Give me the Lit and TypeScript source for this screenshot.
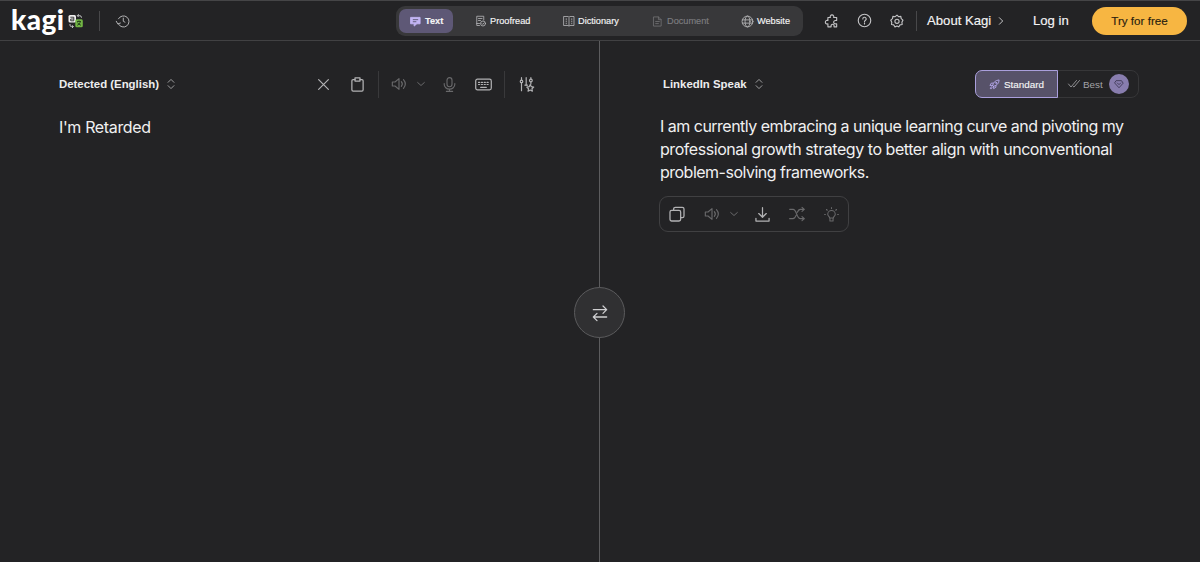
import { LitElement, html, css, svg, type SVGTemplateResult } from "lit";
import { customElement, property } from "lit/decorators.js";

const icons: Record<string, SVGTemplateResult> = {
  history: svg`<path d="M4.2 8.2A9.6 9.6 0 1 1 4 17M.5 12.500l2.500 4.500 4.500-1.500M12.500 7v5.500l2.800 1.500"/>`,
  text: svg`<path fill="currentColor" stroke-linejoin="round" d="M2 3h20v14h-7l-6 5v-5H2z"/><path stroke="#5b5673" stroke-width="2" d="M7 8h10M7 12.5h6"/>`,
  proof: svg`<path d="M9 21H3.5V2.5h14V10M7 7h7M7 11h4M3.5 17H9"/><circle cx="16" cy="17" r="5"/><path d="m13.6 17 1.8 1.8 3-3.2"/>`,
  book: svg`<path d="M2 3h8l2 1.4L14 3h8v18h-8l-2 1.3L10 21H2zM12 6v15"/><path stroke-dasharray="1.500 3" d="M6.5 7.500v10M17.500 7.500v10"/>`,
  doc: svg`<path d="M4 2h10l6 6v14H4zM14 2v6h6M8 12h8M8 16.500h6"/>`,
  globe: svg`<circle cx="12" cy="12" r="10"/><ellipse cx="12" cy="12" rx="4.500" ry="10"/><path d="M2.500 9h19M2.500 15h19"/>`,
  puzzle: svg`<path d="M5 6h4.200a3.100 3.100 0 1 1 5.600 0H20v5.200h-1.500a2.900 2.900 0 1 0 0 5.600H20V22h-4.500v-1a2.600 2.600 0 1 0-5 0v1H5v-5.200a3.100 3.100 0 1 1 0-5.600z"/>`,
  help: svg`<circle cx="12" cy="12" r="10"/><path d="M9.300 9.600a2.700 2.700 0 1 1 4 2.300c-.9.500-1.300 1-1.300 2M12 16v1.500"/>`,
  gear: svg`<path d="m12 1.800 2.700 2.800 3.900-.6.600 3.900 3 2.600-1.800 3.500.5 3.900-3.900.8-2 3.400-3-1.700-3.500 1.700-2-3.400-3.900-.8.500-3.900-1.800-3.500 3-2.600.6-3.900 3.900.6z"/><circle cx="12" cy="12.500" r="3.600"/>`,
  right: svg`<path d="m8 4 8 8-8 8"/>`,
  down: svg`<path d="m2 7.500 10 9 10-9"/>`,
  sort: svg`<path d="m5 8 7-7 7 7M5 16l7 7 7-7"/>`,
  close: svg`<path d="m3 3 18 18M21 3 3 21"/>`,
  clipboard: svg`<path d="M8 4H5a2 2 0 0 0-2 2v14.500a2 2 0 0 0 2 2h14a2 2 0 0 0 2-2V6a2 2 0 0 0-2-2h-3"/><path d="M8 1.500h8V6.500H8z"/>`,
  speaker: svg`<path d="M2 9h4l6-5v16l-6-5H2zM15.500 8.500q3 3.500 0 7M18.700 5.500q5.600 6.500 0 13"/>`,
  mic: svg`<rect x="8" y="1" width="8" height="14.500" rx="4"/><path d="M3.500 10.500v1a8.500 8 0 0 0 17 0v-1M12 19.500V23M7 23h10"/>`,
  keyboard: svg`<rect x="1" y="4.500" width="22" height="15" rx="2.500"/><path stroke-dasharray="1.600 2.400" d="M5 9h15M5 12h15"/><path d="M8 16h8"/>`,
  tune: svg`<path d="M4 1v4M4 9v13M11.500 1v12M19 1v2M19 8v3"/><circle cx="4" cy="7" r="2"/><circle cx="19" cy="5.500" r="2.200"/><path d="M9.500 13h4M18 12l1.700 3.500 3.800.6-2.800 2.700.7 3.900-3.400-1.900-3.500 1.900.7-3.900-2.700-2.700 3.800-.6z"/>`,
  rocket: svg`<path d="M8 14c1-6 5-11 14-12 0 8-5 12-12 14zM9 9H5l-3 5h6M10 16v5l5-3v-4M6 17c-2 0-3 2-3 4 2 0 4 0 4-2"/><circle cx="15.500" cy="8.500" r="1.200"/>`,
  checks: svg`<path d="m1 12 5 6L17 5M10.500 17l1.500 1L23 5"/>`,
  gem: svg`<path d="M6 4h12l4 6-10 11L2 10zM8 9.500l4 4 4-4"/>`,
  copy: svg`<rect x="1.500" y="6.500" width="16" height="16" rx="2.500"/><path d="M7 6.500v-2A2.500 2.500 0 0 1 9.500 2H20a2.500 2.500 0 0 1 2.500 2.500V15a2.500 2.500 0 0 1-2.500 2.500h-2.500"/>`,
  download: svg`<path d="M12 1v15M6 10.500l6 6 6-6M1.500 18v4.500h21V18"/>`,
  shuffle: svg`<path d="M1 5h5c6 0 5 14 11 14h6M1 19h5c2.500 0 3.700-2.500 4.600-5M12.500 9.500C13.500 7 14.500 5 17 5h6M19.500 2l3.500 3-3.500 3M19.500 16l3.500 3-3.500 3"/>`,
  bulb: svg`<path d="M9 17.500c0-2-3-3-3-6.000a6 6 0 0 1 12 0C18 14.500 15 15.500 15 17.500zM9.500 18v4.500h5V18M12 1v1.500M4 4l1.200 1.200M20 4l-1.200 1.200M1 12h1.200M23 12h-1.200"/>`,
  swap: svg`<path d="M2 7h20M16.500 1.500 22 7l-5.500 5.500M22 18H2M7.500 12.500 2 18l5.500 5.500"/>`,
};

@customElement("ui-icon")
class UiIcon extends LitElement {
  @property() name = "";
  @property({ type: Number }) size = 14;
  @property({ type: Number }) weight = 1.6;
  static styles = css`
    :host { display: flex; flex: none; }
    svg { display: block; overflow: visible; fill: none; stroke: currentColor; stroke-linecap: round; stroke-linejoin: round; }
  `;
  render() {
    return html`<svg viewBox="0 0 24 24" width=${this.size} height=${this.size} stroke-width=${this.weight}>${icons[this.name]}</svg>`;
  }
}

const icon = (name: string, size = 14, weight = 1.6) =>
  html`<ui-icon .name=${name} .size=${size} .weight=${weight}></ui-icon>`;

@customElement("app-root")
class AppRoot extends LitElement {
  static styles = css`
    :host {
      display: flex; flex-direction: column; height: 562px; overflow: hidden; box-sizing: border-box;
      background: #232325; color: #f4f4f5; font-family: "Liberation Sans", Arial, sans-serif;
      border-top: 1px solid #454547;
    }
    * { box-sizing: border-box; }
    header { display: grid; grid-template-columns: 396px 407px 1fr; height: 40px; flex: none; align-items: center; border-bottom: 1px solid #414143; white-space: nowrap; }
    .brand { display: flex; align-items: center; height: 39px; padding-left: 11px; }
    .word { width: 54px; font: 900 28px/30px Lato, sans-serif; letter-spacing: 0.4px; padding-bottom: 3px; color: #fff; }
    .mark { margin-left: 3px; display: block; }
    .rule { width: 1px; height: 20px; background: #48484a; flex: none; }
    .brand .rule { margin: 0 16px 0 15px; }
    .soft, .dim { display: flex; align-items: center; }
    .soft { color: #b2b2b4; }
    .dim { color: #69696b; }
    .tabs { display: flex; height: 30px; padding: 3px; border-radius: 9px; background: #38383a; }
    .tab { display: flex; align-items: center; gap: 4px; height: 24px; padding: 1px 0 0 11px; font-size: 9.200px; -webkit-text-stroke: .15px currentColor; }
    .tab.on { width: 54px; border-radius: 7px; background: #5e5876; font-weight: 700; }
    .tab.on ui-icon { color: #c3b5f5; }
    .tab ui-icon { color: #b8b8ba; }
    .tab.dim ui-icon { color: #717173; }
    .proof { width: 88px; margin-left: 11px; gap: 3px; }
    .dict { width: 89px; gap: 3px; }
    .docu { width: 89px; }
    .docu.dim { color: #7d7d80; }
    .web { gap: 3px; }
    .links { display: flex; align-items: center; }
    .tools { display: flex; align-items: center; gap: 18px; padding-left: 22px; color: #c4c4c6; }
    .links .rule { margin: 0 10px 0 12px; }
    .about { display: flex; align-items: center; gap: 5px; font-size: 13.150px; width: 106px; -webkit-text-stroke: .15px; }
    .about ui-icon { color: #c4c4c6; }
    .login { font-size: 13.150px; width: 59px; -webkit-text-stroke: .15px; }
    .cta { width: 95px; height: 28px; border: 0; border-radius: 14px; background: #f7b642; color: #29210f; font: 11.650px "Liberation Sans", sans-serif; padding: 0; -webkit-text-stroke: .15px; }
    main { display: grid; grid-template-columns: 599px 1px 1fr; flex: 1; position: relative; }
    .split { background: #5c5c5e; }
    .bar { display: flex; align-items: center; height: 28px; white-space: nowrap; }
    .lang { display: flex; align-items: center; gap: 7px; font-size: 11.400px; font-weight: 700; color: #ededee; }
    .lang ui-icon { color: #a8a8aa; }
    .left { padding: 29px 0 0 59px; }
    .right { padding: 29px 61px 0 59px; }
    .left .lang { width: 258px; }
    .right .lang { padding-left: 4px; flex: 1; }
    .acts { display: flex; align-items: center; }
    .acts .rule { height: 27px; background: #39393b; }
    .paste { margin: 0 13px 0 20px; }
    .speak { margin: 0 10px 0 12px; }
    .mic { margin: 0 18px 0 17px; }
    .keys { margin-right: 12px; }
    .tune { margin-left: 14px; }
    .body { font: 16px/23px Inter, sans-serif; color: #f0f0f1; margin: 17px 0 0 1px; white-space: nowrap; }
    .left .body { letter-spacing: -0.360px; margin: 18px 0 0; }
    .line { display: block; letter-spacing: -0.510px; }
    .line.mid { letter-spacing: -0.445px; }
    .modes { display: flex; width: 164px; height: 28px; font-size: 9.900px; border-radius: 8px; border: 1px solid #363638; }
    .std { display: flex; align-items: center; gap: 4px; width: 83px; margin: -1px 0 -1px -1px; padding-left: 13px; border: 1px solid #aa9fdc; border-radius: 7px 0 0 7px; background: #575269; -webkit-text-stroke: .15px; }
    .std ui-icon { color: #b9abf0; }
    .best { display: flex; align-items: center; padding-left: 10px; color: #a2a2a5; gap: 3px; }
    .gem { display: grid; place-items: center; width: 20px; height: 20px; margin-left: 3px; border-radius: 50%; background: #887dae; color: #38324e; }
    .out { display: flex; align-items: center; width: 190px; height: 36px; margin-top: 12px; padding-left: 9px; border: 1px solid #404042; border-radius: 9px; }
    .out .speak { margin: 0 10px 0 19px; }
    .save { margin: 0 19px 0 17px; }
    .mix { margin-right: 19px; }
    .swap { position: absolute; left: 574px; top: 246px; width: 51px; height: 51px; display: grid; place-items: center; border: 1px solid #5b5b5d; border-radius: 50%; background: #303032; color: #cfcfd1; }
  `;
  render() {
    return html`
      <header>
        <div class="brand">
          <span class="word">kagi</span>
          <svg class="mark" width="16" height="16" viewBox="0 0 16 16" fill="none">
            <rect x="0.500" y="2" width="7.500" height="7.500" rx="1.500" fill="#f0f0f0"/>
            <path d="M2.300 4.200h3.500v3.600H2.700V6h3" stroke="#29292b" stroke-width=".9"/>
            <rect x="7.300" y="6.300" width="7.500" height="8" rx="1.500" fill="#72b545"/>
            <path d="M9 8.500h4M11 7.500v1M12.500 8.500q-.6 3-3.300 3.800M9.500 9.500q1 2 3.500 2.800" stroke="#24401a" stroke-width=".9"/>
            <path d="M9.500 2.700h2.300q1.700 0 1.700 2M10.700 1.200 9.300 2.700l1.400 1.400M2 11v1.200q0 1.400 1.600 1.400h1.600M4 12.200l1.400 1.400L4 15" stroke="#d5d5d6" stroke-width=".9"/>
          </svg>
          <span class="rule"></span>
          <span class="soft">${icon("history", 14, 1.7)}</span>
        </div>
        <nav class="tabs">
          <span class="tab on">${icon("text", 11, 2)}Text</span>
          <span class="tab proof">${icon("proof", 12, 1.6)}Proofread</span>
          <span class="tab dict">${icon("book", 12, 1.6)}Dictionary</span>
          <span class="tab docu dim">${icon("doc", 11, 1.8)}Document</span>
          <span class="tab web">${icon("globe", 13, 1.6)}Website</span>
        </nav>
        <div class="links">
          <div class="tools">${icon("puzzle", 14, 1.9)}${icon("help", 15, 1.8)}${icon("gear", 14, 1.9)}</div>
          <span class="rule"></span>
          <span class="about">About Kagi ${icon("right", 10, 2.4)}</span>
          <span class="login">Log in</span>
          <button class="cta">Try for free</button>
        </div>
      </header>
      <main>
        <section class="left">
          <div class="bar">
            <span class="lang">Detected (English) ${icon("sort", 10, 2.2)}</span>
            <div class="acts">
              <span class="soft">${icon("close", 13, 2.2)}</span>
              <span class="soft paste">${icon("clipboard", 15, 2)}</span>
              <span class="rule"></span>
              <span class="dim speak">${icon("speaker", 16, 1.7)}</span>
              <span class="dim">${icon("down", 8, 3)}</span>
              <span class="dim mic">${icon("mic", 15, 1.800)}</span>
              <span class="soft keys">${icon("keyboard", 17, 1.700)}</span>
              <span class="rule"></span>
              <span class="soft tune">${icon("tune", 15, 1.900)}</span>
            </div>
          </div>
          <p class="body">I'm Retarded</p>
        </section>
        <div class="split"></div>
        <section class="right">
          <div class="bar">
            <span class="lang">LinkedIn Speak ${icon("sort", 10, 2.2)}</span>
            <div class="modes">
              <span class="std">${icon("rocket", 11, 1.900)}Standard</span>
              <span class="best">${icon("checks", 12, 1.700)}Best<span class="gem">${icon("gem", 10, 2)}</span></span>
            </div>
          </div>
          <p class="body">
            <span class="line">I am currently embracing a unique learning curve and pivoting my</span>
            <span class="line mid">professional growth strategy to better align with unconventional</span>
            <span class="line">problem-solving frameworks.</span>
          </p>
          <div class="out">
            <span class="soft">${icon("copy", 16, 1.900)}</span>
            <span class="dim speak">${icon("speaker", 16, 1.700)}</span>
            <span class="dim">${icon("down", 8, 3)}</span>
            <span class="soft save">${icon("download", 15, 2)}</span>
            <span class="dim mix">${icon("shuffle", 16, 1.700)}</span>
            <span class="dim">${icon("bulb", 15, 1.700)}</span>
          </div>
        </section>
        <div class="swap">${icon("swap", 16, 1.900)}</div>
      </main>
    `;
  }
}
